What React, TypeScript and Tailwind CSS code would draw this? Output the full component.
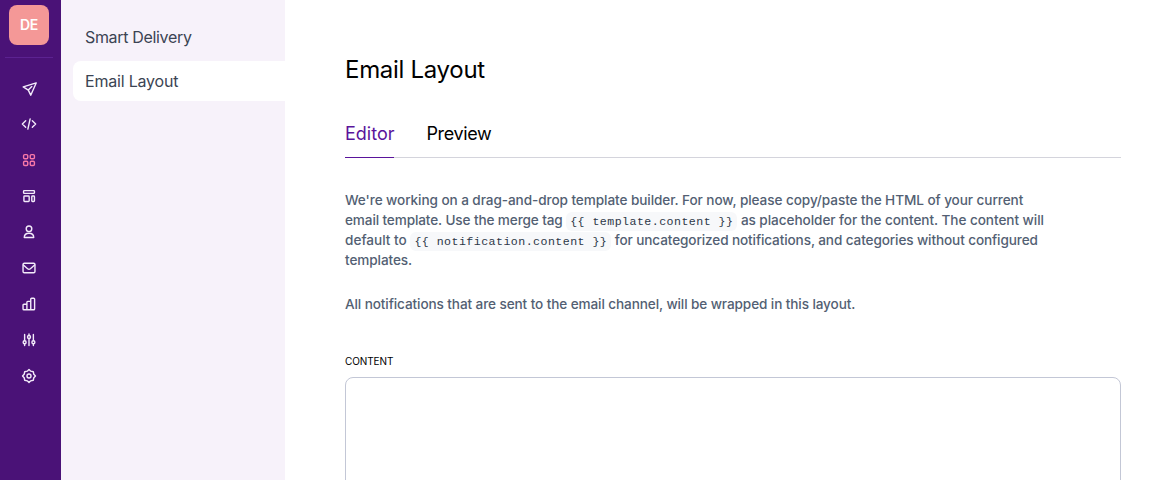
import type { ReactNode } from 'react';

type NavIcon = { name: string; active?: boolean; art: ReactNode };

const icons: NavIcon[] = [
  { name: 'Send', art: <path d="M16.200 2.200 1.400 6.800l5.800 3.600 2.800 5.800 6.200-14ZM7.200 10.400l4-4" /> },
  { name: 'Developers', art: <path d="M4.200 4.400.4 8l3.800 3.600M11.800 4.400 15.600 8l-3.800 3.600M9.300 2.200 6.700 13.800" /> },
  {
    name: 'Categories',
    active: true,
    art: (
      <>
        <rect x="1.8" y="1.8" width="4.8" height="4.8" rx="1.4" />
        <rect x="9.4" y="1.8" width="4.8" height="4.8" rx="1.4" />
        <rect x="1.8" y="9.4" width="4.8" height="4.8" rx="1.4" />
        <rect x="9.4" y="9.4" width="4.8" height="4.8" rx="1.4" />
      </>
    ),
  },
  {
    name: 'Templates',
    art: (
      <>
        <rect x="1.8" y="1.8" width="12.4" height="3.2" rx="0.8" />
        <rect x="2.2" y="8" width="6" height="6.2" rx="0.8" />
        <rect x="11.2" y="8" width="3" height="6.2" rx="0.8" />
      </>
    ),
  },
  {
    name: 'Users',
    art: (
      <>
        <circle cx="8" cy="4.4" r="3.2" />
        <path d="M2.6 14.2c0-3 2-4.8 5.4-4.8s5.4 1.8 5.4 4.8Z" />
      </>
    ),
  },
  {
    name: 'Email',
    art: (
      <>
        <rect x="1.2" y="2.6" width="13.6" height="10.8" rx="1.4" />
        <path d="m1.6 4.6 4.8 4.2c1 .8 2.2.8 3.2 0l4.8-4.2" />
      </>
    ),
  },
  {
    name: 'Reports',
    art: (
      <path d="M1.2 9.2a1 1 0 0 1 1-1h3.4v6.4H2.2a1 1 0 0 1-1-1ZM5.6 14.6V6a1 1 0 0 1 1-1H10v9.6ZM10 14.6V2.4a1 1 0 0 1 1-1h2.4a1 1 0 0 1 1 1v11.2a1 1 0 0 1-1 1Z" />
    ),
  },
  {
    name: 'Channels',
    art: (
      <>
        <path d="M3 1.6v7M3 12.6v1.8M8 1.2v1M8 6.6v7.8M13 1.6v7M13 12.6v1.8" />
        <circle cx="3" cy="10.6" r="1.7" />
        <circle cx="8" cy="4.6" r="1.7" />
        <circle cx="13" cy="10.6" r="1.7" />
      </>
    ),
  },
  {
    name: 'Settings',
    art: (
      <>
        <path d="m8 .6 2 1.900 2.900.6.6 2.900L15.400 8l-1.900 2-.6 2.900-2.900.6L8 15.400l-2-1.900-2.900-.6-.6-2.900L.6 8l1.900-2 .6-2.900L6 2.500Z" />
        <circle cx="8" cy="8" r="2.3" />
      </>
    ),
  },
];

function Code({ children }: { children: string }) {
  return (
    <code className="rounded-md bg-[#f7f8fa] px-1 pt-[3px] pb-[3px] font-['Liberation_Mono',monospace] text-[11.6px] leading-none font-normal tracking-[0.46px] text-[#2d3748]">
      {children}
    </code>
  );
}

export default function App() {
  return (
    <div className="flex h-[480px] w-full overflow-hidden bg-white font-['Inter',sans-serif]">
      <nav className="flex w-[61px] shrink-0 flex-col bg-[#4a1277] pt-[5px]">
        <div className="ml-[9px] flex size-10 items-center justify-center rounded-lg bg-[#f49897] pb-px text-[14px] font-semibold tracking-[-0.4px] text-white">
          DE
        </div>
        <div className="mt-3 ml-[5px] h-px w-12 bg-[#5c2291]" />
        <div className="mt-3 flex flex-col">
          {icons.map((icon) => (
            <a
              key={icon.name}
              aria-label={icon.name}
              className={`flex h-9 w-[58px] items-center justify-center ${icon.active ? 'text-[#f778a8]' : 'text-[#f3ebfa]'}`}
            >
              <svg viewBox="0 0 16 16" className="size-[14px] overflow-visible" fill="none" stroke="currentColor" strokeWidth="1.6" strokeLinejoin="round" strokeLinecap="round">
                {icon.art}
              </svg>
            </a>
          ))}
        </div>
      </nav>

      <aside className="flex w-56 shrink-0 flex-col gap-1 bg-[#f7f2fa] pt-[17px] pl-3 text-[16px] leading-6 text-[#3b4453]">
        <a className="flex h-10 items-center pl-3">
          <span className="tracking-[-0.33px]">Smart Delivery</span>
        </a>
        <a className="flex h-10 items-center rounded-l-lg bg-white pl-3">
          <span className="tracking-[-0.2px]">Email Layout</span>
        </a>
      </aside>

      <main className="flex w-[836px] shrink-0 flex-col pt-[54px] pl-[60px]">
        <h1 className="text-[24px] leading-8 tracking-[-0.3px] text-black">Email Layout</h1>
        <div className="mt-[34px] flex h-[38px] gap-8 border-b border-[#d4d4dc] text-[18px] leading-7 text-black">
          <a className="h-[38px] border-b border-[#5a149b] text-[#5a149b]">Editor</a>
          <a className="tracking-[-0.36px]">Preview</a>
        </div>
        <div className="mt-8 text-[13.6px] leading-5 font-medium whitespace-nowrap text-[#535f73]">
          <p>
            <span className="block tracking-[-0.082px]">
              We're working on a drag-and-drop template builder. For now, please copy/paste the HTML of your current
            </span>
            <span className="block">
              <span className="tracking-[-0.126px]">email template. Use the merge tag </span>
              <Code>{'{{ template.content }}'}</Code>
              <span className="tracking-[-0.06px]"> as placeholder for the content. The content will</span>
            </span>
            <span className="block">
              default to <Code>{'{{ notification.content }}'}</Code>
              <span className="tracking-[-0.12px]"> for uncategorized notifications, and categories without configured</span>
            </span>
            <span className="block tracking-[-0.1px]">templates.</span>
          </p>
          <p className="mt-6 tracking-[-0.108px]">
            All notifications that are sent to the email channel, will be wrapped in this layout.
          </p>
        </div>
        <label className="mt-[39px] text-[10px] leading-4 tracking-[-0.1px] text-black">CONTENT</label>
        <div className="mt-2 h-[200px] shrink-0 rounded-lg border border-[#c3c7d6]" />
      </main>
    </div>
  );
}
